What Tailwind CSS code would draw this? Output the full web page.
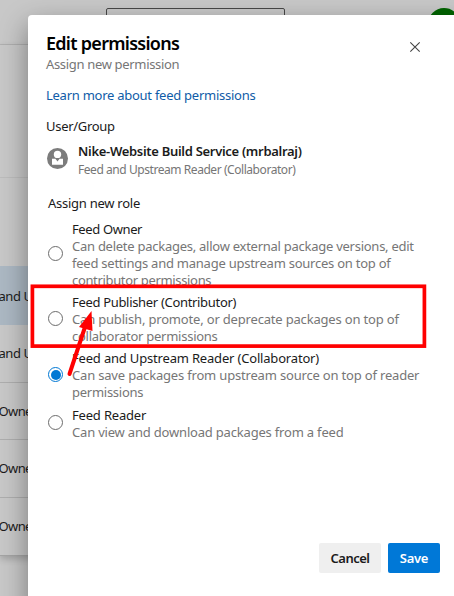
<!DOCTYPE html>
<html lang="en">
<head>
<meta charset="utf-8">
<title>Edit permissions</title>
<script src="https://cdn.jsdelivr.net/npm/@tailwindcss/browser@4"></script>
</head>
<body class="relative h-[596px] w-[454px] overflow-hidden bg-[#c8c8c8] font-['Noto_Sans','Open_Sans',sans-serif] text-[13px] leading-[17px] tracking-[-0.26px] text-[#1b1b1b]">
  <!-- Page behind the dialog -->
  <div class="flex h-full flex-col">
    <header class="flex h-[45px] shrink-0 border-b border-[#b4b4b4] pt-2">
      <div class="ml-[106px] h-8 w-[179px] shrink-0 rounded-[2px] border border-[#484848]"></div>
      <div class="ml-[143px] size-8 shrink-0 rounded-full bg-[#006400]"></div>
    </header>
    <main class="flex flex-col border-b border-[#a4a4a4] shadow-[0_3px_7px_rgba(0,0,0,0.2)]">
      <div class="h-[133px] border-b border-[#bcbcbc]"></div>
      <div class="h-[88px]"></div>
      <div class="flex h-[59px] items-center whitespace-nowrap bg-[#acb8c3] pt-px tracking-[-0.45px]"><span class="-ml-[1.5px]">and U</span></div>
      <div class="flex h-[58px] items-center whitespace-nowrap border-b border-[#aeaeae] tracking-[-0.45px]"><span class="-ml-[1.5px]">and U</span></div>
      <div class="flex h-[57px] items-center border-b border-[#aeaeae] tracking-[-0.6px]"><span class="-ml-[1.5px]">Owne</span></div>
      <div class="flex h-[58px] items-center border-b border-[#aeaeae] tracking-[-0.6px]"><span class="-ml-[1.5px]">Owne</span></div>
      <div class="flex h-[57px] items-center tracking-[-0.6px]"><span class="-ml-[1.5px]">Owne</span></div>
    </main>
  </div>

  <!-- Dialog -->
  <section class="absolute left-[28px] top-[15px] flex h-[600px] w-[440px] flex-col rounded-tl-[4px] bg-white pl-[18px] shadow-[0_10px_28px_rgba(0,0,0,0.4)]">
    <div class="flex h-[61px] pt-[16px]">
      <div class="w-[363px] whitespace-nowrap">
        <h1 class="h-[25px] text-[18px] font-semibold leading-[25px] tracking-[-0.72px] text-black">Edit permissions</h1>
        <p class="tracking-[-0.33px] text-[#767676]">Assign new permission</p>
      </div>
      <svg class="mt-[10px] size-[12px]" viewBox="0 0 12 12" fill="none" stroke="#444" stroke-width="1.1"><path d="M1.3 1.3 10.7 10.7M10.7 1.3 1.3 10.7"/></svg>
    </div>
    <a class="mt-[11px] whitespace-nowrap text-[#0f5ca8]">Learn more about feed permissions</a>
    <div class="mt-[14px] tracking-[-0.3px]">User/Group</div>
    <div class="mt-[8px] flex h-[36px] whitespace-nowrap">
      <svg class="ml-px mt-[5px] size-[21px]" viewBox="0 0 21 21"><circle cx="10.5" cy="10.5" r="10.5" fill="#7c7c7c"/><circle cx="10.5" cy="6.4" r="3.7" fill="#fff"/><path d="M5 10.8h3.4l2.1 2.6 2.1-2.6H16v6H5z" fill="#fff"/></svg>
      <div class="ml-[10px]">
        <div class="h-[18px] font-semibold tracking-[-0.3px]">Nike-Website Build Service (mrbalraj)</div>
        <div class="text-[12px] tracking-[-0.44px] text-[#767676]">Feed and Upstream Reader (Collaborator)</div>
      </div>
    </div>
    <div class="ml-[2px] mt-[16px]">Assign new role</div>
    <div class="ml-[2px] mt-[9px] flex flex-col whitespace-nowrap">
      <div class="flex items-center gap-[9px]">
        <span class="size-[15px] -translate-y-[2px] rounded-full border border-[#6c6c6c]"></span>
        <div><div class="tracking-[-0.38px]">Feed Owner</div><div class="text-[#767676]">Can delete packages, allow external package versions, edit<br><span class="tracking-[-0.24px]">feed settings and manage upstream sources on top of</span><br><span class="tracking-[-0.34px]">contributor permissions</span></div></div>
      </div>
      <div class="mt-[5px] flex items-center gap-[9px]">
        <span class="size-[15px] -translate-y-px rounded-full border border-[#6c6c6c]"></span>
        <div><div class="tracking-[-0.32px]">Feed Publisher (Contributor)</div><div class="text-[#767676]"><span class="tracking-[-0.18px]">Can publish, promote, or deprecate packages on top of</span><br>collaborator permissions</div></div>
      </div>
      <div class="mt-[5px] flex items-center gap-[9px]">
        <span class="flex size-[15px] -translate-y-px items-center justify-center rounded-full border border-[#0078d4]"><span class="size-[10px] rounded-full bg-[#0078d4]"></span></span>
        <div><div class="tracking-[-0.18px]">Feed and Upstream Reader (Collaborator)</div><div class="text-[#767676]"><span class="tracking-[-0.18px]">Can save packages from upstream source on top of reader</span><br>permissions</div></div>
      </div>
      <div class="mt-[6px] flex items-center gap-[9px]">
        <span class="size-[15px] -translate-y-[2px] rounded-full border border-[#6c6c6c]"></span>
        <div><div class="tracking-[-0.18px]">Feed Reader</div><div class="tracking-[-0.19px] text-[#767676]">Can view and download packages from a feed</div></div>
      </div>
    </div>
    <div class="mt-[102px] flex gap-[7px] pl-[273px] font-semibold">
      <button class="h-[30px] w-[62px] rounded-[2px] bg-[#efefef] tracking-[-0.5px]">Cancel</button>
      <button class="h-[30px] w-[52px] rounded-[2px] bg-[#0078d7] text-white">Save</button>
    </div>
  </section>

  <!-- Highlight frame and arrow -->
  <svg class="absolute left-0 top-0" width="454" height="596" viewBox="0 0 454 596" fill="none">
    <rect x="32.4" y="286.3" width="392" height="59.8" stroke="#f00" stroke-width="3.7"/>
    <path d="M69.5 374 86 324" stroke="#f00" stroke-width="4" stroke-linecap="round"/>
    <path d="M91.5 311 92.5 331 79 327Z" fill="#f00"/>
  </svg>
</body>
</html>
